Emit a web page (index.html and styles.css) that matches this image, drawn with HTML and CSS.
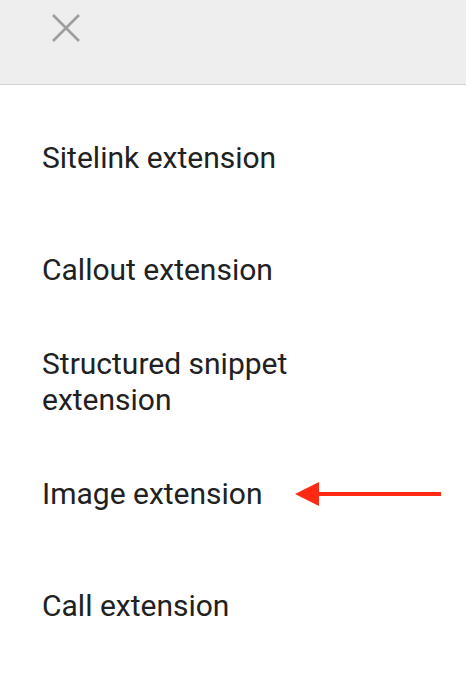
FILE: index.html
```html
<!DOCTYPE html>
<html>
<head>
<meta charset="utf-8">
<link rel="stylesheet" href="styles.css">
</head>
<body>
<header class="topbar">
  <button class="close" aria-label="Close">
    <svg width="30" height="30" viewBox="0 0 30 30"><path d="M2 2 L28 28 M28 2 L2 28" stroke="#9e9e9e" stroke-width="2.6" fill="none"/></svg>
  </button>
</header>
<ul class="menu">
  <li class="item">Sitelink extension</li>
  <li class="item">Callout extension</li>
  <li class="item">Structured snippet<br>extension</li>
  <li class="item item-arrow">Image extension
    <svg class="arrow" width="146" height="26" viewBox="0 0 146 26"><polygon points="0,13 24,1 24,25" fill="#ff2a14"/><rect x="22" y="11" width="124" height="4" fill="#ff2a14"/></svg>
  </li>
  <li class="item">Call extension</li>
</ul>
</body>
</html>
```
FILE: styles.css
```css
html, body { margin: 0; padding: 0; background: #fff; }
body { font-family: Roboto, "Noto Sans", sans-serif; width: 466px; height: 690px; overflow: hidden; }
.topbar {
  height: 84px;
  background: #eeeeee;
  border-bottom: 1px solid #d6d6d6;
  display: flex;
  align-items: flex-start;
}
.close {
  border: 0; background: none; padding: 0;
  margin: 13px 0 0 51px;
  width: 30px; height: 30px;
  display: block;
}
.close svg { display: block; }
.menu { list-style: none; margin: 0; padding: 17px 0 0 0; }
.item {
  height: 112px;
  display: flex;
  align-items: center;
  padding-left: 42px;
  font-size: 30px;
  line-height: 36px;
  color: #212121;
}
.item-arrow { position: relative; }
.arrow { position: absolute; left: 295px; top: 43px; }
```
